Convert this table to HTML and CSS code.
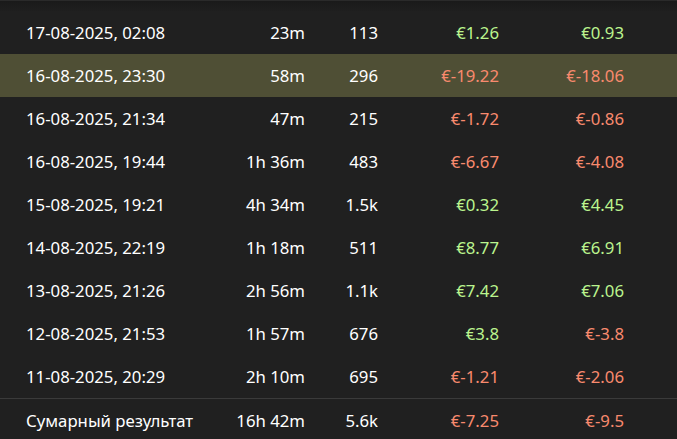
FILE: index.html
```html
<!DOCTYPE html>
<html lang="pl">
<head>
<meta charset="utf-8">
<link rel="stylesheet" href="styles.css">
</head>
<body>
<div class="wrap">
  <div class="topbar"></div>
  <table class="sessions">
    <colgroup>
      <col class="c-date"><col class="c-dur"><col class="c-cnt"><col class="c-a"><col class="c-b"><col class="c-pad">
    </colgroup>
    <tbody>
      <tr><td class="date">17-08-2025, 02:08</td><td>23m</td><td>113</td><td class="pos">€1.26</td><td class="pos">€0.93</td><td></td></tr>
      <tr class="hl"><td class="date">16-08-2025, 23:30</td><td>58m</td><td>296</td><td class="neg">€-19.22</td><td class="neg">€-18.06</td><td></td></tr>
      <tr><td class="date">16-08-2025, 21:34</td><td>47m</td><td>215</td><td class="neg">€-1.72</td><td class="neg">€-0.86</td><td></td></tr>
      <tr><td class="date">16-08-2025, 19:44</td><td>1h 36m</td><td>483</td><td class="neg">€-6.67</td><td class="neg">€-4.08</td><td></td></tr>
      <tr><td class="date">15-08-2025, 19:21</td><td>4h 34m</td><td>1.5k</td><td class="pos">€0.32</td><td class="pos">€4.45</td><td></td></tr>
      <tr><td class="date">14-08-2025, 22:19</td><td>1h 18m</td><td>511</td><td class="pos">€8.77</td><td class="pos">€6.91</td><td></td></tr>
      <tr><td class="date">13-08-2025, 21:26</td><td>2h 56m</td><td>1.1k</td><td class="pos">€7.42</td><td class="pos">€7.06</td><td></td></tr>
      <tr><td class="date">12-08-2025, 21:53</td><td>1h 57m</td><td>676</td><td class="pos">€3.8</td><td class="neg">€-3.8</td><td></td></tr>
      <tr><td class="date">11-08-2025, 20:29</td><td>2h 10m</td><td>695</td><td class="neg">€-1.21</td><td class="neg">€-2.06</td><td></td></tr>
    </tbody>
    <tfoot>
      <tr><td class="date">Сумарный результат</td><td>16h 42m</td><td>5.6k</td><td class="neg">€-7.25</td><td class="neg">€-9.5</td><td></td></tr>
    </tfoot>
  </table>
</div>
</body>
</html>
```
FILE: styles.css
```css
html, body {
  margin: 0;
  padding: 0;
  background: #202020;
}
body {
  font-family: "Noto Sans", "Open Sans", sans-serif;
  font-size: 16.75px;
  color: #ffffff;
  overflow: hidden;
}
.wrap {
  width: 677px;
}
.topbar {
  height: 11px;
  border-top: 1px solid #2a2a2a;
  box-sizing: border-box;
  background: linear-gradient(#1a1a1a, #1f1f1f);
}
.sessions {
  width: 677px;
  border-collapse: collapse;
  table-layout: fixed;
}
.c-date { width: 200px; }
.c-dur { width: 105px; }
.c-cnt { width: 73px; }
.c-a { width: 121px; }
.c-b { width: 125px; }
.c-pad { width: 53px; }
.sessions td {
  height: 43px;
  padding: 0;
  text-align: right;
  white-space: nowrap;
  vertical-align: middle;
}
.sessions td.date {
  text-align: left;
  padding-left: 26px;
}
.sessions tr.hl td {
  background: #4f4f35;
}
.sessions tfoot td {
  border-top: 1px solid #3a3a3a;
}
.pos { color: #bbf48e; }
.neg { color: #f98a6e; }
```
